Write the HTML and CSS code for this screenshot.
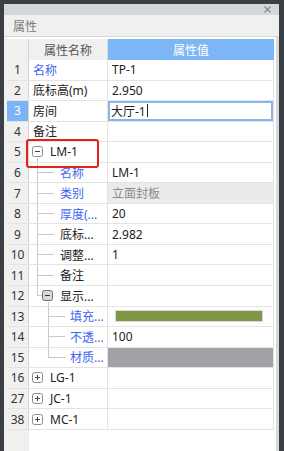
FILE: index.html
```html
<!DOCTYPE html>
<html lang="zh">
<head>
<meta charset="utf-8">
<link rel="stylesheet" href="styles.css">
</head>
<body>
<div class="frame">
  <div class="titlebar">
    <svg class="close" width="7" height="7" viewBox="0 0 7 7"><path d="M0.5 0.5L6.5 6.5M6.5 0.5L0.5 6.5" stroke="#8a8c90" stroke-width="1.3"/></svg>
  </div>
  <div class="panel-head">属性</div>
  <div class="body">
    <div class="gutter-left"></div>
    <div class="grid">
      <div class="row head">
        <div class="num"></div>
        <div class="name">属性名称</div>
        <div class="val">属性值</div>
      </div>

      <div class="row"><div class="num">1</div><div class="name blue">名称</div><div class="val">TP-1</div></div>
      <div class="row"><div class="num">2</div><div class="name">底标高(m)</div><div class="val">2.950</div></div>
      <div class="row"><div class="num sel">3</div><div class="name">房间</div><div class="val"><div class="input">大厅-1<span class="caret"></span></div></div></div>
      <div class="row"><div class="num">4</div><div class="name">备注</div><div class="val"></div></div>
      <div class="row"><div class="num">5</div><div class="name group g0"><svg class="box" width="11" height="11" viewBox="0 0 11 11"><rect x="0.5" y="0.5" width="10" height="10" rx="2" fill="#fff" stroke="#8c8c8c"/><path d="M3 5.5H8" stroke="#444"/></svg><span>LM-1</span></div><div class="val"></div></div>
      <div class="row"><div class="num">6</div><div class="name l1 mid1 blue">名称</div><div class="val">LM-1</div></div>
      <div class="row"><div class="num">7</div><div class="name l1 mid1 blue">类别</div><div class="val dis">立面封板</div></div>
      <div class="row"><div class="num">8</div><div class="name l1 mid1 blue">厚度(...</div><div class="val">20</div></div>
      <div class="row"><div class="num">9</div><div class="name l1 mid1">底标...</div><div class="val">2.982</div></div>
      <div class="row"><div class="num">10</div><div class="name l1 mid1">调整...</div><div class="val">1</div></div>
      <div class="row"><div class="num">11</div><div class="name l1 mid1">备注</div><div class="val"></div></div>
      <div class="row"><div class="num">12</div><div class="name group g1"><svg class="box" width="11" height="11" viewBox="0 0 11 11"><rect x="0.5" y="0.5" width="10" height="10" rx="2" fill="#d9d9d9" stroke="#6e6e6e"/><path d="M3 5.5H8" stroke="#333"/></svg><span>显示...</span></div><div class="val"></div></div>
      <div class="row"><div class="num">13</div><div class="name l2 mid2 blue">填充...</div><div class="val"><div class="swatch"></div></div></div>
      <div class="row"><div class="num">14</div><div class="name l2 mid2 blue">不透...</div><div class="val">100</div></div>
      <div class="row"><div class="num">15</div><div class="name l2 end2 blue">材质...</div><div class="val fill"></div></div>
      <div class="row"><div class="num">16</div><div class="name group gc"><svg class="box" width="11" height="11" viewBox="0 0 11 11"><rect x="0.5" y="0.5" width="10" height="10" rx="2" fill="#fff" stroke="#8c8c8c"/><path d="M3 5.5H8M5.5 3V8" stroke="#444"/></svg><span>LG-1</span></div><div class="val"></div></div>
      <div class="row"><div class="num">27</div><div class="name group gc"><svg class="box" width="11" height="11" viewBox="0 0 11 11"><rect x="0.5" y="0.5" width="10" height="10" rx="2" fill="#fff" stroke="#8c8c8c"/><path d="M3 5.5H8M5.5 3V8" stroke="#444"/></svg><span>JC-1</span></div><div class="val"></div></div>
      <div class="row"><div class="num">38</div><div class="name group gc"><svg class="box" width="11" height="11" viewBox="0 0 11 11"><rect x="0.5" y="0.5" width="10" height="10" rx="2" fill="#fff" stroke="#8c8c8c"/><path d="M3 5.5H8M5.5 3V8" stroke="#444"/></svg><span>MC-1</span></div><div class="val"></div></div>

      <div class="filler"><div class="num"></div></div>
    </div>
    <div class="gutter-right"></div>
  </div>
  <div class="annot"></div>
</div>
</body>
</html>
```

FILE: styles.css
```css
html, body {
  margin: 0;
  padding: 0;
}
body {
  background: #3b3e44;
  width: 284px;
  height: 451px;
  overflow: hidden;
  font-family: "Noto Sans", "Noto Sans CJK SC", sans-serif;
  font-size: 12px;
  color: #222;
}
.frame {
  position: relative;
  margin: 4px 5px 0 4px;
  height: 447px;
  background: #ffffff;
  display: flex;
  flex-direction: column;
}
.titlebar {
  height: 11px;
  background: #d5d6da;
  display: flex;
  align-items: center;
  justify-content: flex-end;
  padding-right: 8px;
}
.close {
  display: block;
}
.panel-head {
  height: 21px;
  line-height: 21px;
  background: #f0f0f0;
  border-bottom: 1px solid #d6d6d6;
  padding-left: 9px;
  color: #7a7a7a;
  font-family: "Noto Sans CJK SC", sans-serif;
}
.body {
  flex: 1;
  display: flex;
  min-height: 0;
}
.gutter-left {
  width: 3px;
  background: #f0f0f0;
}
.gutter-right {
  width: 3px;
  margin-left: 2px;
  background: #d9d9d9;
}
.grid {
  width: 267px;
  display: flex;
  flex-direction: column;
  padding-top: 2px;
}
.row {
  display: grid;
  grid-template-columns: 22px 79px 166px;
  height: 20.55px;
  box-sizing: border-box;
  border-bottom: 1px solid #e3e3e3;
}
.row > div {
  display: flex;
  align-items: center;
  min-width: 0;
  white-space: nowrap;
  overflow: hidden;
}
.num {
  justify-content: center;
  background: #f0f0f0;
  border-right: 1px solid #d4d4d4;
  color: #333;
}
.num.sel {
  background: #7ab4f4;
  color: #fff;
}
.name {
  padding-left: 4px;
  border-right: 1px solid #e3e3e3;
  font-family: "Noto Sans", "Noto Sans CJK SC", sans-serif;
}
.val {
  padding-left: 4px;
  border-right: 1px solid #e3e3e3;
}
.head {
  height: 21px;
  border-bottom: none;
}
.head .name {
  justify-content: center;
  padding-left: 0;
  background: #f0f0f0;
  color: #555;
  border-right: 1px solid #dcdcdc;
}
.head .val {
  justify-content: center;
  padding-left: 0;
  background: #7db6f5;
  color: #fff;
  border-right: none;
}
.blue {
  color: #3f66f2;
}
.input {
  flex: 1;
  align-self: stretch;
  margin-left: -4px;
  border: 2px solid #86b6ec;
  display: flex;
  align-items: center;
  padding-left: 1px;
}
.caret {
  display: inline-block;
  width: 1px;
  height: 13px;
  background: #222;
  margin-left: 1px;
}
.dis {
  background: #ebebeb;
  color: #8a8a8a;
}
.swatch {
  width: 146px;
  height: 10px;
  margin-left: 4px;
  background: #7f9747;
  outline: 1px solid #d8d8d8;
}
.val.fill {
  background: #a3a3a7;
}
.group .box {
  flex: none;
  display: block;
}
.g0, .gc {
  padding-left: 3px;
}
.g0 span, .gc span {
  margin-left: 7px;
}
.g0 {
  background: linear-gradient(#c9c9c9, #c9c9c9) 8px 100% / 1px 4px no-repeat;
}
.g1 {
  padding-left: 13px;
  background:
    linear-gradient(#c9c9c9, #c9c9c9) 8px 0 / 1px 50% no-repeat,
    linear-gradient(#c9c9c9, #c9c9c9) 8px 50% / 5px 1px no-repeat,
    linear-gradient(#c9c9c9, #c9c9c9) 19px 100% / 1px 4px no-repeat;
}
.g1 span {
  margin-left: 7px;
}
.l1 {
  padding-left: 31px;
}
.l2 {
  padding-left: 41px;
}
.mid1 {
  background:
    linear-gradient(#c9c9c9, #c9c9c9) 8px 0 / 1px 100% no-repeat,
    linear-gradient(#c9c9c9, #c9c9c9) 8px 50% / 17px 1px no-repeat;
}
.mid2 {
  background:
    linear-gradient(#c9c9c9, #c9c9c9) 19px 0 / 1px 100% no-repeat,
    linear-gradient(#c9c9c9, #c9c9c9) 19px 50% / 17px 1px no-repeat;
}
.end2 {
  background:
    linear-gradient(#c9c9c9, #c9c9c9) 19px 0 / 1px 50% no-repeat,
    linear-gradient(#c9c9c9, #c9c9c9) 19px 50% / 17px 1px no-repeat;
}
.filler {
  flex: 1;
  display: flex;
}
.filler .num {
  width: 22px;
  border-right: none;
}
.annot {
  position: absolute;
  left: 22px;
  top: 135px;
  width: 69px;
  height: 25px;
  border: 2px solid #e4221d;
  border-radius: 3px;
}
```
